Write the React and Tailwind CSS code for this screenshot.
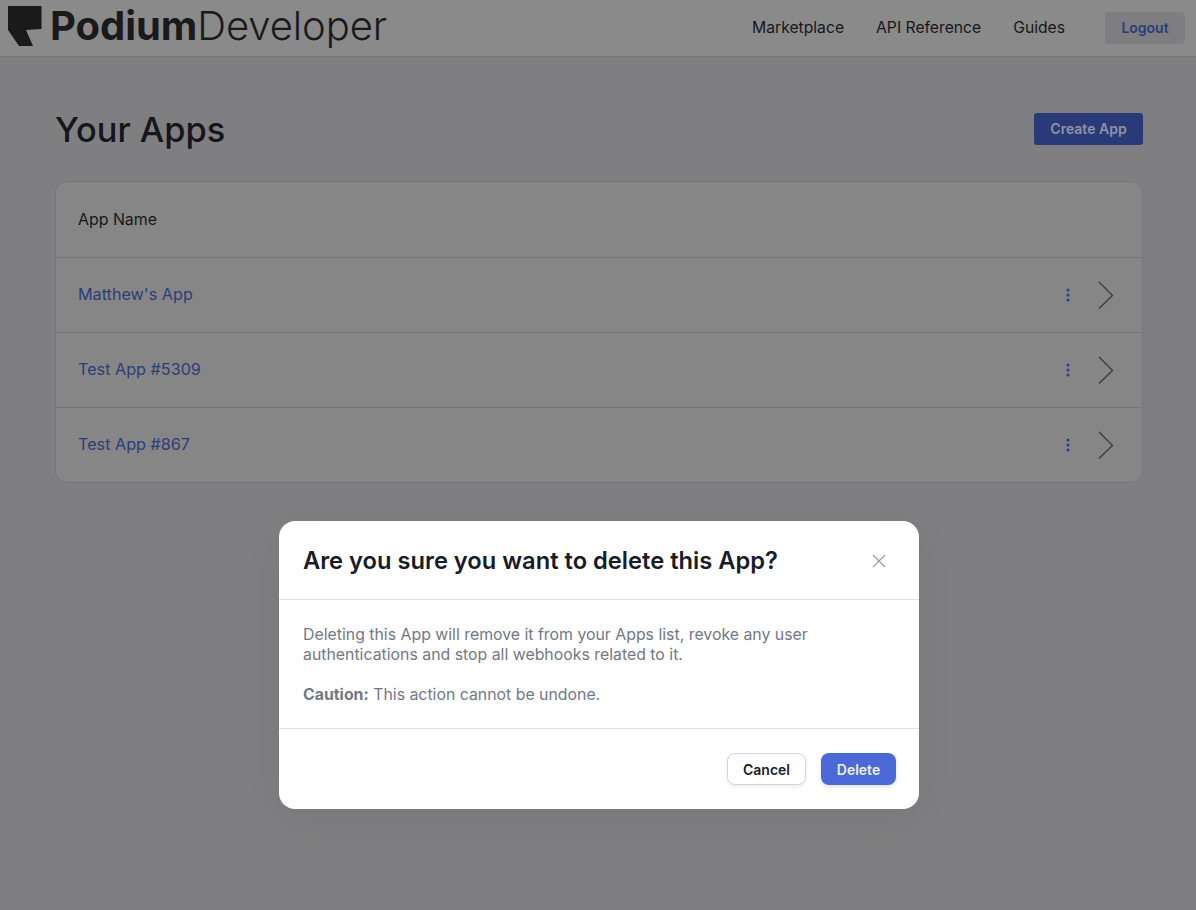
import React from 'react';

const apps = ["Matthew's App", 'Test App #5309', 'Test App #867'];

function Logo() {
  return (
    <svg width="34" height="40" viewBox="0 0 34 40" className="shrink-0">
      <path d="M0 0H33.5V23L18 24L25 40H11L0 24Z" fill="#1a1a1b" />
    </svg>
  );
}

function AppRow({ name }) {
  return (
    <div className="h-[75px] flex items-center justify-between border-t border-[#75757a] pl-[22px] pr-[27px]">
      <a className="text-[#2c3d79] text-[16.2px] mb-[2px]">{name}</a>
      <div className="flex items-center gap-[26px]">
        <svg width="6" height="14" viewBox="0 0 6 14">
          <circle cx="3" cy="2" r="1.5" fill="#2b3c85" />
          <circle cx="3" cy="7" r="1.5" fill="#2b3c85" />
          <circle cx="3" cy="12" r="1.5" fill="#2b3c85" />
        </svg>
        <svg width="18" height="28" viewBox="0 0 18 28" fill="none">
          <path d="M2 1L15.5 14.5L2 27.5" stroke="#3c3d42" strokeWidth="1.4" />
        </svg>
      </div>
    </div>
  );
}

export default function App() {
  return (
    <div className="relative min-h-[910px] bg-[#7f7f81] font-['Inter',sans-serif] overflow-hidden">
      <header className="h-[57px] bg-[#8a8a8a] flex items-center justify-between border-b border-[#77777f] pl-[8px] pr-[11px]">
        <div className="flex items-center gap-[8px] mt-[-5px]">
          <Logo />
          <div className="text-[40px] leading-[46px] text-[#1a1a1b] tracking-[-0.06px]">
            <span className="font-bold">Podium</span>
            <span className="font-light">Developer</span>
          </div>
        </div>
        <nav className="flex items-center">
          <a className="text-[15.7px] text-[#17171a]">Marketplace</a>
          <a className="text-[15.7px] text-[#17171a] ml-[32px]">API Reference</a>
          <a className="text-[15.7px] text-[#17171a] ml-[32px]">Guides</a>
          <button className="ml-[40px] w-[80px] h-[32px] pb-[2px] rounded-[4px] bg-[#7e7e81] text-[#2c3d79] text-[14px] font-semibold">Logout</button>
        </nav>
      </header>

      <main className="pl-[55px] pr-[53px] pt-[56px]">
        <div className="flex items-center justify-between h-[32px]">
          <h1 className="text-[34.4px] font-medium text-[#15151a] mt-[2px]">Your Apps</h1>
          <button className="w-[109px] h-[32px] pb-[2px] rounded-[3px] bg-[#2a3a78] text-[#8f93a3] text-[14px] font-semibold">Create App</button>
        </div>

        <div className="mt-[36px] rounded-[12px] bg-[#868686] border border-[#75757a]">
          <div className="h-[75px] flex items-center pl-[22px] text-[15.9px] text-[#17171a] pt-[1px]">App Name</div>
          {apps.map((name) => (
            <AppRow key={name} name={name} />
          ))}
        </div>
      </main>

      {/* modal */}
      <div className="absolute left-[279px] top-[521px] w-[640px] h-[288px] bg-white rounded-[16px] shadow-[0_8px_40px_rgba(0,0,0,0.06)]">
        <div className="h-[79px] flex items-center justify-between border-b border-[#e1e1ea] pl-[24px] pr-[33px]">
          <h2 className="text-[23.7px] font-semibold text-[#181c28] mt-[1px]">Are you sure you want to delete this App?</h2>
          <svg width="14" height="14" viewBox="0 0 14 14" fill="none" className="mt-[2px]">
            <path d="M1 1L13 13M13 1L1 13" stroke="#9aa0ad" strokeWidth="1.3" />
          </svg>
        </div>
        <div className="h-[129px] border-b border-[#e1e1ea] px-[24px] pt-[25px] text-[15.85px] leading-[20px] text-[#727885]">
          <p>
            Deleting this App will remove it from your Apps list, revoke any user
            <br />
            authentications and stop all webhooks related to it.
          </p>
          <p className="mt-[20px]">
            <b className="font-bold">Caution:</b> This action cannot be undone.
          </p>
        </div>
        <div className="flex justify-end gap-[15px] pt-[24px] pr-[23px]">
          <button className="w-[79px] h-[32px] rounded-[8px] bg-white border border-[#d5d5dc] shadow-[0_2px_4px_rgba(0,0,0,0.08)] text-[14px] font-semibold text-[#181c28]">Cancel</button>
          <button className="w-[75px] h-[32px] rounded-[8px] bg-[#4a69d6] shadow-[0_2px_4px_rgba(0,0,0,0.12)] text-[14px] font-semibold text-[#eef1fb]">Delete</button>
        </div>
      </div>
    </div>
  );
}
